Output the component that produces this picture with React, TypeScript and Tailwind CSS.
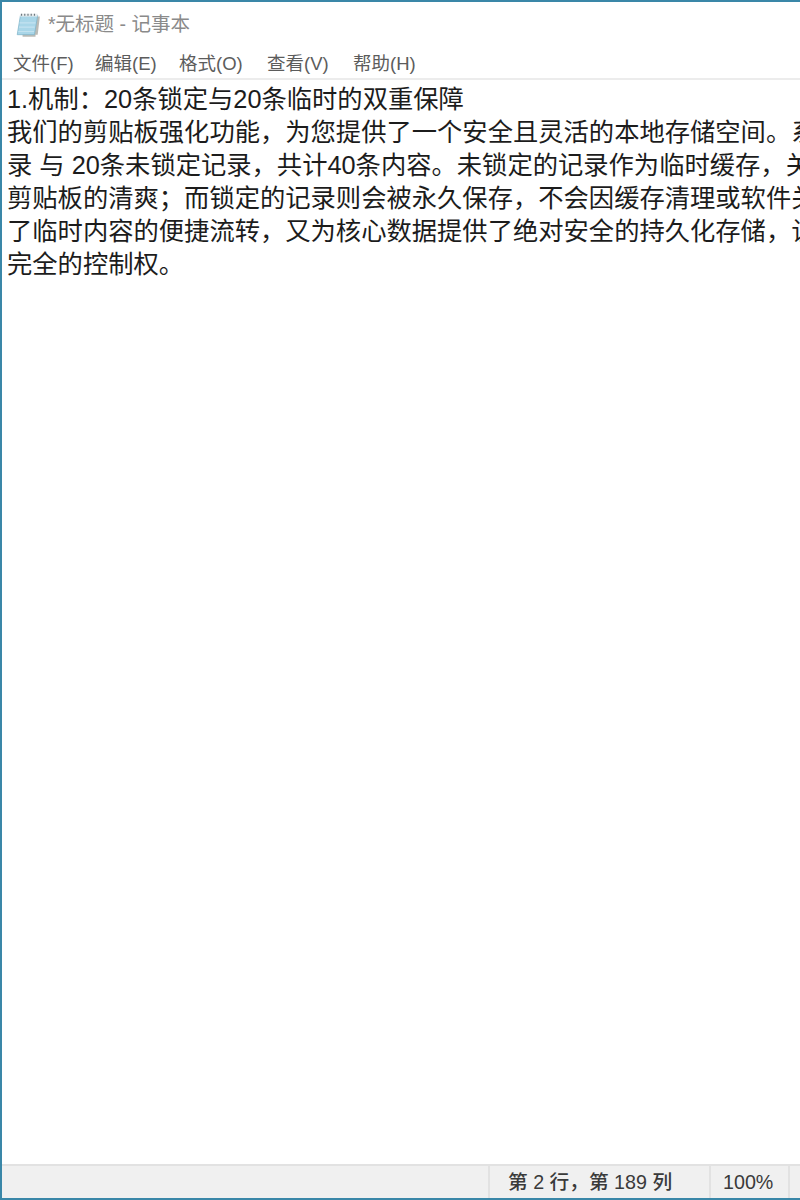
const cjk = "font-['Liberation_Sans','Noto_Sans_CJK_SC',sans-serif]";

const menus = [
  { label: "文件(F)", width: "w-[82px]" },
  { label: "编辑(E)", width: "w-[84px]" },
  { label: "格式(O)", width: "w-[88px]" },
  { label: "查看(V)", width: "w-[86px]" },
  { label: "帮助(H)", width: "w-[80px]" },
];

const lines = [
  "1.机制：20条锁定与20条临时的双重保障",
  "我们的剪贴板强化功能，为您提供了一个安全且灵活的本地存储空间。系统",
  "录 与 20条未锁定记录，共计40条内容。未锁定的记录作为临时缓存，关闭",
  "剪贴板的清爽；而锁定的记录则会被永久保存，不会因缓存清理或软件关闭",
  "了临时内容的便捷流转，又为核心数据提供了绝对安全的持久化存储，让您",
  "完全的控制权。",
];

function NotepadIcon() {
  return (
    <svg width="28" height="28" viewBox="0 0 26 26" className="blur-[0.5px]">
      <path d="M7 5 H24 L22 22 H20 V24 H8 Z" fill="#8d8d86" opacity="0.6" />
      <path d="M6 4 H22 L19 22 H3 Z" fill="#a9d6e8" stroke="#7fb4c9" strokeWidth="0.7" />
      <path d="M5.2 11 H20 M4.6 15 H19.2 M4 19 H18.6" stroke="#c3e2ef" strokeWidth="1" />
      <path d="M6 2.5 H22 L21.6 5 H5.6 Z" fill="#e8ecee" />
      <path d="M7 2.5 V4.5 M10 2.5 V4.5 M13 2.5 V4.5 M16 2.5 V4.5 M19 2.5 V4.5" stroke="#6b777d" strokeWidth="1.1" />
    </svg>
  );
}

export default function App() {
  return (
    <div className={`${cjk} flex h-[1200px] w-[800px] flex-col overflow-hidden border-b-2 border-l-2 border-t-2 border-[#3a87a8] bg-white`}>
      <div className="flex h-[44px] items-center pl-[12px] pt-[2px]">
        <NotepadIcon />
        <span className="ml-[6px] text-[19.5px] text-[#8a8a8a]">*无标题 - 记事本</span>
      </div>
      <div className="flex h-[34px] items-center border-b-2 border-[#ececec] pl-[11px] pt-[4px] text-[18.5px] text-[#5c5c5c]">
        {menus.map((menu) => (
          <span key={menu.label} className={menu.width}>{menu.label}</span>
        ))}
      </div>
      <div className="flex-1 overflow-hidden pl-[5px] pt-[3px] text-[25.3px] leading-[33px] text-[#1c1c1c]">
        {lines.map((line) => (
          <div key={line} className="whitespace-nowrap">{line}</div>
        ))}
      </div>
      <div className="flex h-[34px] border-t-2 border-[#e2e2e2] bg-[#f0f0f0] text-[19.7px] text-[#3a3a3a]">
        <div className="w-[486px]" />
        <div className="flex w-[221px] items-center border-l-2 border-[#e2e2e2] pl-[18px] pt-[2px] font-medium">第 2 行，第 189 列</div>
        <div className="flex w-[81px] items-center border-x-2 border-[#e2e2e2] pl-[12px] pt-[2px]">100%</div>
      </div>
    </div>
  );
}
